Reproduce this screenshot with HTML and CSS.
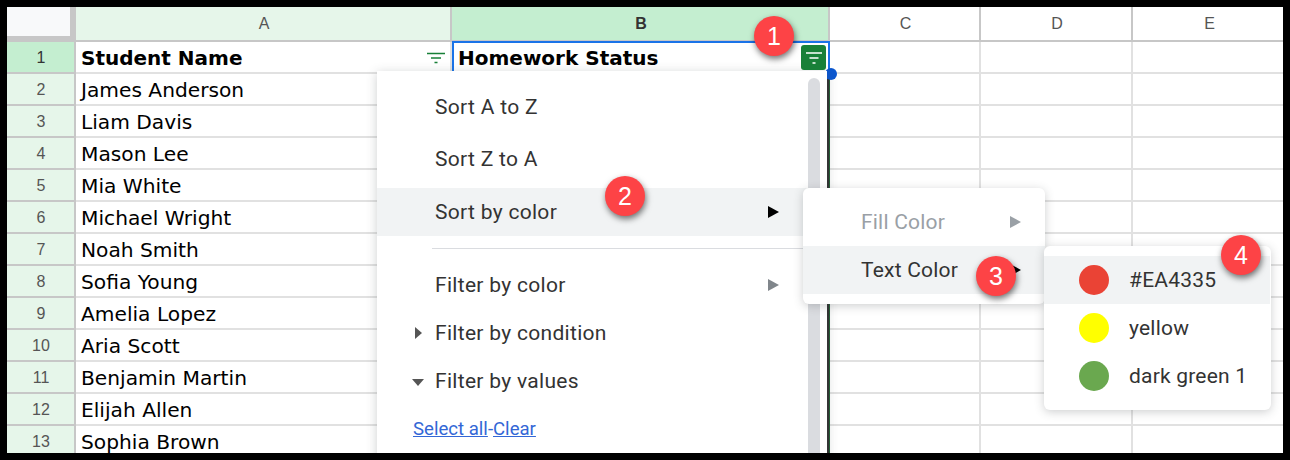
FILE: index.html
```html
<!DOCTYPE html>
<html lang="en">

<head>
    <meta charset="UTF-8">
    <title>Homework Sheet</title>
    <link rel="stylesheet" href="styles.css">
</head>

<body>
    <div class="sheet">
        <div class="grid">
            <div class="corner"></div>
            <div class="col-head active">A</div>
            <div class="col-head selected">B</div>
            <div class="col-head">C</div>
            <div class="col-head">D</div>
            <div class="col-head">E</div>

            <div class="row-head selected">1</div>
            <div class="cell bold filter-cell">Student Name
                <svg class="filter-icon" width="20" height="12" viewBox="0 0 20 12"><path d="M1 1.5h18M5 6h10M8.5 10.5h3" stroke="#188038" stroke-width="1.5" fill="none"/></svg>
            </div>
            <div class="cell bold status">Homework Status</div>
            <div class="cell"></div><div class="cell"></div><div class="cell"></div>

            <div class="row-head">2</div><div class="cell">James Anderson</div><div class="cell"></div><div class="cell"></div><div class="cell"></div><div class="cell"></div>
            <div class="row-head">3</div><div class="cell">Liam Davis</div><div class="cell"></div><div class="cell"></div><div class="cell"></div><div class="cell"></div>
            <div class="row-head">4</div><div class="cell">Mason Lee</div><div class="cell"></div><div class="cell"></div><div class="cell"></div><div class="cell"></div>
            <div class="row-head">5</div><div class="cell">Mia White</div><div class="cell"></div><div class="cell"></div><div class="cell"></div><div class="cell"></div>
            <div class="row-head">6</div><div class="cell">Michael Wright</div><div class="cell"></div><div class="cell"></div><div class="cell"></div><div class="cell"></div>
            <div class="row-head">7</div><div class="cell">Noah Smith</div><div class="cell"></div><div class="cell"></div><div class="cell"></div><div class="cell"></div>
            <div class="row-head">8</div><div class="cell">Sofia Young</div><div class="cell"></div><div class="cell"></div><div class="cell"></div><div class="cell"></div>
            <div class="row-head">9</div><div class="cell">Amelia Lopez</div><div class="cell"></div><div class="cell"></div><div class="cell"></div><div class="cell"></div>
            <div class="row-head">10</div><div class="cell">Aria Scott</div><div class="cell"></div><div class="cell"></div><div class="cell"></div><div class="cell"></div>
            <div class="row-head">11</div><div class="cell">Benjamin Martin</div><div class="cell"></div><div class="cell"></div><div class="cell"></div><div class="cell"></div>
            <div class="row-head">12</div><div class="cell">Elijah Allen</div><div class="cell"></div><div class="cell"></div><div class="cell"></div><div class="cell"></div>
            <div class="row-head">13</div><div class="cell">Sophia Brown</div><div class="cell"></div><div class="cell"></div><div class="cell"></div><div class="cell"></div>
        </div>

        <div class="col-line"></div>
        <div class="selection"></div>
        <div class="handle"></div>

        <div class="filter-menu">
            <div class="scrollbar"></div>
            <div class="menu-item">Sort A to Z</div>
            <div class="menu-item">Sort Z to A</div>
            <div class="menu-item hover color-row">Sort by color<span class="arrow dark"></span></div>
            <div class="separator"></div>
            <div class="menu-item tight">Filter by color<span class="arrow grey"></span></div>
            <div class="menu-item tight"><span class="toggle right"></span>Filter by condition</div>
            <div class="menu-item tight"><span class="toggle down"></span>Filter by values</div>
            <div class="links"><a href="#">Select all</a>-<a href="#">Clear</a></div>
        </div>

        <div class="submenu">
            <div class="sub-item disabled">Fill Color<span class="arrow light"></span></div>
            <div class="sub-item hover">Text Color<span class="arrow dark"></span></div>
        </div>

        <div class="color-menu">
            <div class="color-item hover"><span class="dot red"></span>#EA4335</div>
            <div class="color-item"><span class="dot yellow"></span>yellow</div>
            <div class="color-item"><span class="dot green"></span>dark green 1</div>
        </div>

        <button class="filter-btn" type="button">
            <svg width="18" height="14" viewBox="0 0 18 14"><path d="M1 2h16M4.5 7h9M7.5 12h3" stroke="#fff" stroke-width="1.6" fill="none"/></svg>
        </button>

        <div class="badge one">1</div>
        <div class="badge two">2</div>
        <div class="badge three">3</div>
        <div class="badge four">4</div>
    </div>
</body>

</html>
```

FILE: styles.css
```css
body {
    margin: 0;
    background-color: #000;
    font-family: "Liberation Sans", Arial, sans-serif;
}

.sheet {
    position: relative;
    width: 1276px;
    height: 446px;
    margin: 7px 0 0 7px;
    background-color: #fff;
    overflow: hidden;
}

.grid {
    display: grid;
    grid-template-columns: 69px 376px 378px 151px 152px 153px;
    grid-template-rows: 35px repeat(13, 32px);
}

.corner {
    background-color: #f8f9fa;
    border-right: 6px solid #c7c7c7;
    border-bottom: 6px solid #c7c7c7;
}

.col-head,
.row-head {
    display: flex;
    align-items: center;
    justify-content: center;
    box-sizing: border-box;
    font-size: 16px;
    color: #555;
    border-right: 2px solid #c7c7c7;
    border-bottom: 2px solid #c7c7c7;
}

.col-head {
    padding-left: 2px;
}

.row-head {
    padding: 2px 0 0 1px;
}

.col-head.active,
.row-head {
    background-color: #e6f6ea;
}

.col-head.selected,
.row-head.selected {
    background-color: #c4eed0;
    color: #333;
}

.col-head.selected {
    font-weight: bold;
}

.cell {
    display: flex;
    align-items: center;
    box-sizing: border-box;
    padding: 2px 0 0 5px;
    font-family: "DejaVu Sans", Verdana, sans-serif;
    font-size: 20.2px;
    color: #000;
    white-space: nowrap;
    border-right: 2px solid #e1e1e1;
    border-bottom: 2px solid #e1e1e1;
}

.bold {
    font-size: 20px;
    font-weight: bold;
}

.filter-cell {
    justify-content: space-between;
    padding-right: 4px;
}

.status {
    padding-left: 6px;
}

.col-line {
    position: absolute;
    left: 820px;
    top: 66px;
    width: 3px;
    height: 380px;
    background: linear-gradient(to right, #333, #333 60%, #188038);
}

.selection {
    position: absolute;
    left: 445px;
    top: 34px;
    width: 374px;
    height: 28px;
    border: 2px solid #1a73e8;
}

.handle {
    position: absolute;
    left: 818px;
    top: 61px;
    width: 12px;
    height: 12px;
    border-radius: 50%;
    background-color: #0b57d0;
}

.filter-btn {
    position: absolute;
    left: 794px;
    top: 38px;
    width: 25px;
    height: 25px;
    padding: 0;
    display: flex;
    align-items: center;
    justify-content: center;
    border: none;
    border-radius: 3px;
    background-color: #188038;
}

.filter-menu,
.submenu,
.color-menu {
    position: absolute;
    background-color: #fff;
    font-family: Roboto, Arial, sans-serif;
    font-size: 21px;
    letter-spacing: 0.2px;
    color: #333;
    box-shadow: 0 2px 10px rgba(60, 64, 67, 0.25);
}

.filter-menu {
    left: 370px;
    top: 64px;
    width: 450px;
    height: 420px;
    padding-top: 12px;
    box-sizing: border-box;
    letter-spacing: 0.3px;
}

.scrollbar {
    position: absolute;
    left: 431px;
    top: 7px;
    width: 12px;
    height: 400px;
    border-radius: 6px 6px 0 0;
    background-color: #dadce0;
}

.menu-item {
    position: relative;
    display: flex;
    align-items: center;
    height: 48px;
    padding-left: 58px;
    margin-bottom: 4px;
}

.menu-item.tight {
    margin-bottom: 0;
}

.color-row {
    margin-top: 5px;
    margin-bottom: 0;
    width: 428px;
}

.hover {
    background-color: #f1f3f4;
}

.separator {
    height: 1px;
    margin: 12px 20px 12px 55px;
    background-color: #dadce0;
}

.arrow {
    position: absolute;
    top: 50%;
    margin-top: -6px;
    border-top: 6px solid transparent;
    border-bottom: 6px solid transparent;
    border-left: 11px solid #000;
}

.menu-item .arrow {
    left: 391px;
}

.arrow.grey {
    border-left-color: #80868b;
}

.arrow.light {
    border-left-color: #9aa0a6;
}

.toggle {
    position: absolute;
}

.toggle.right {
    left: 38px;
    border-top: 6px solid transparent;
    border-bottom: 6px solid transparent;
    border-left: 7px solid #555;
}

.toggle.down {
    left: 35px;
    top: 22px;
    border-left: 6px solid transparent;
    border-right: 6px solid transparent;
    border-top: 7px solid #555;
}

.links {
    padding-left: 36px;
    margin-top: 13px;
    font-size: 18.6px;
    letter-spacing: 0;
    color: #3367d6;
}

.links a {
    color: #3367d6;
}

.submenu {
    left: 796px;
    top: 181px;
    width: 242px;
    height: 116px;
    padding-top: 10px;
    box-sizing: border-box;
    border-radius: 6px;
}

.sub-item {
    position: relative;
    display: flex;
    align-items: center;
    height: 48px;
    padding-left: 58px;
}

.sub-item.disabled {
    color: #9aa0a6;
}

.sub-item .arrow {
    left: 207px;
}

.color-menu {
    left: 1037px;
    top: 239px;
    width: 227px;
    height: 164px;
    padding-top: 10px;
    box-sizing: border-box;
    border-radius: 6px;
}

.color-item {
    display: flex;
    align-items: center;
    height: 48px;
    padding-left: 35px;
    margin-right: 1px;
}

.dot {
    width: 30px;
    height: 30px;
    margin-right: 20px;
    border-radius: 50%;
}

.dot.red {
    background-color: #ea4335;
}

.dot.yellow {
    background-color: #ffff00;
}

.dot.green {
    background-color: #6aa84f;
}

.badge {
    position: absolute;
    display: flex;
    align-items: center;
    justify-content: center;
    width: 40px;
    height: 40px;
    border-radius: 50%;
    background-color: #fd4346;
    color: #fff;
    font-size: 25px;
    box-shadow: 1px 3px 6px rgba(0, 0, 0, 0.55);
}

.badge.one {
    left: 747px;
    top: 9px;
}

.badge.two {
    left: 598px;
    top: 169px;
}

.badge.three {
    left: 969px;
    top: 249px;
}

.badge.four {
    left: 1214px;
    top: 228px;
}
```
